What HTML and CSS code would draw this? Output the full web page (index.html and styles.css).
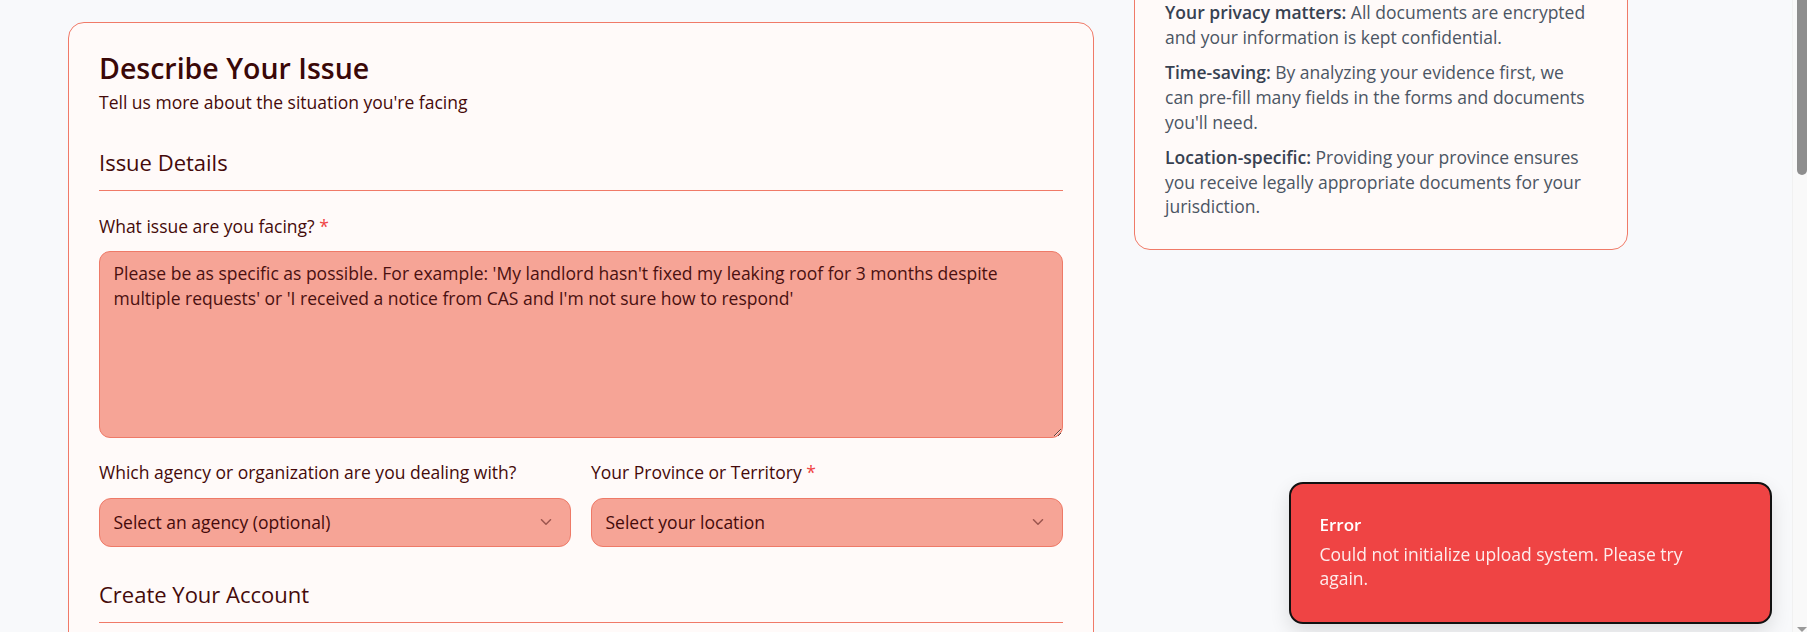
FILE: index.html
```html
<!DOCTYPE html>
<html lang="en">
<head>
<meta charset="utf-8">
<title>Describe Your Issue</title>
<link rel="stylesheet" href="styles.css">
</head>
<body>
<div class="page">
  <main class="main-card">
    <h1 class="title">Describe Your Issue</h1>
    <p class="subtitle">Tell us more about the situation you're facing</p>

    <h2 class="section-title">Issue Details</h2>

    <div class="field">
      <label class="label" for="issue">What issue are you facing? <span class="req">*</span></label>
      <textarea id="issue" class="textarea" placeholder="Please be as specific as possible. For example: 'My landlord hasn't fixed my leaking roof for 3 months despite multiple requests' or 'I received a notice from CAS and I'm not sure how to respond'"></textarea>
    </div>

    <div class="field-row">
      <div class="field">
        <label class="label">Which agency or organization are you dealing with?</label>
        <div class="select">
          <span>Select an agency (optional)</span>
          <svg class="chev" viewBox="0 0 24 24" width="18" height="18" fill="none" stroke="currentColor" stroke-width="2" stroke-linecap="round" stroke-linejoin="round"><path d="m6 9 6 6 6-6"/></svg>
        </div>
      </div>
      <div class="field">
        <label class="label">Your Province or Territory <span class="req">*</span></label>
        <div class="select">
          <span>Select your location</span>
          <svg class="chev" viewBox="0 0 24 24" width="18" height="18" fill="none" stroke="currentColor" stroke-width="2" stroke-linecap="round" stroke-linejoin="round"><path d="m6 9 6 6 6-6"/></svg>
        </div>
      </div>
    </div>

    <h2 class="section-title section-title--tight">Create Your Account</h2>
  </main>

  <aside class="side-col">
    <div class="side-card">
      <p class="side-p"><strong>Your privacy matters:</strong> All documents are encrypted and your information is kept confidential.</p>
      <p class="side-p"><strong>Time-saving:</strong> By analyzing your evidence first, we can pre-fill many fields in the forms and documents you'll need.</p>
      <p class="side-p"><strong>Location-specific:</strong> Providing your province ensures you receive legally appropriate documents for your jurisdiction.</p>
    </div>
  </aside>
</div>

<div class="scrollbar" aria-hidden="true">
  <div class="scroll-thumb"></div>
  <div class="scroll-arrow"></div>
</div>

<div class="toast" role="alert">
  <div class="toast-title">Error</div>
  <div class="toast-msg">Could not initialize upload system. Please try again.</div>
</div>
</body>
</html>
```

FILE: styles.css
```css
body {
  margin: 0;
  background: #f8f9fb;
  font-family: "Open Sans", "Noto Sans", sans-serif;
  font-size: 17.5px;
  line-height: 25px;
  color: #450a0a;
}

.page {
  display: grid;
  grid-template-columns: 1026px 494px;
  column-gap: 40px;
  align-items: start;
  padding: 22px 0 20px 68px;
}

.main-card {
  box-sizing: border-box;
  min-height: 760px;
  background: #fffaf9;
  border: 1px solid #f07a68;
  border-radius: 16px;
  padding: 27px 30px 30px 30px;
}

.title {
  margin: 0;
  font-size: 28.5px;
  line-height: 36px;
  font-weight: 600;
  color: #3a0808;
}

.subtitle {
  margin: 3.5px 0 0;
  font-size: 17.5px;
  line-height: 25px;
}

.section-title {
  margin: 32.5px 0 0;
  font-size: 22px;
  line-height: 30px;
  font-weight: 400;
  padding-bottom: 13px;
  border-bottom: 1px solid #f07a68;
}
.section-title--tight {
  margin-top: 31.5px;
}

.field {
  display: flex;
  flex-direction: column;
  gap: 12.5px;
  margin-top: 22.5px;
}

.field-row {
  display: grid;
  grid-template-columns: 1fr 1fr;
  column-gap: 20px;
}

.label {
  display: block;
  font-size: 17.5px;
  line-height: 25px;
}

.req {
  color: #ef4444;
}

.textarea {
  box-sizing: border-box;
  display: block;
  width: 100%;
  height: 186.5px;
  margin: 0;
  padding: 9px 13.5px;
  font-family: inherit;
  font-size: 17.5px;
  line-height: 25px;
  color: #450a0a;
  background: #f6a496;
  border: 1px solid #ee7a68;
  border-radius: 11px;
  resize: vertical;
  outline: none;
}
.textarea::placeholder {
  color: #4a1010;
  opacity: 1;
}

.select {
  box-sizing: border-box;
  height: 49.5px;
  display: flex;
  align-items: center;
  justify-content: space-between;
  padding: 0 15px 0 13.5px;
  background: #f6a496;
  border: 1px solid #ee7a68;
  border-radius: 12px;
  color: #450a0a;
}

.chev {
  flex: none;
  opacity: 0.5;
}

.side-col {
  margin-top: -53px;
}

.side-card {
  background: #fffaf9;
  border: 1px solid #f07a68;
  border-radius: 16px;
  padding: 30px;
}

.side-p {
  margin: 0 0 10.5px;
  font-size: 17.5px;
  line-height: 24.75px;
  color: #4b5563;
}
.side-p:last-child {
  margin-bottom: 0;
}
.side-p strong {
  font-weight: 600;
  color: #374151;
}

/* window scrollbar */
.scrollbar {
  position: fixed;
  top: 0;
  right: 0;
  bottom: 0;
  width: 15px;
  background: #f9f9f9;
  border-left: 1px solid #f1f1f1;
  box-sizing: border-box;
}
.scroll-thumb {
  margin-left: 4px;
  width: 10px;
  height: 175px;
  background: #8e8e8e;
  border-radius: 0 0 5px 5px;
}
.scroll-arrow {
  position: absolute;
  left: 4px;
  bottom: 0;
  width: 0;
  height: 0;
  border-left: 5px solid transparent;
  border-right: 5px solid transparent;
  border-top: 5px solid #9a9a9a;
}

.toast {
  position: fixed;
  right: 35px;
  bottom: 8px;
  box-sizing: border-box;
  width: 483.5px;
  padding: 28.5px 36px 31px 29px;
  background: #ef4444;
  border: 2px solid #111111;
  border-radius: 14px;
  box-shadow: 0 8px 20px rgba(0, 0, 0, 0.12);
  color: #ffffff;
  display: flex;
  flex-direction: column;
  gap: 5px;
}

.toast-title {
  font-size: 17px;
  line-height: 24px;
  font-weight: 600;
}

.toast-msg {
  font-size: 17.5px;
  line-height: 24.6px;
  color: rgba(255, 255, 255, 0.9);
}
```
